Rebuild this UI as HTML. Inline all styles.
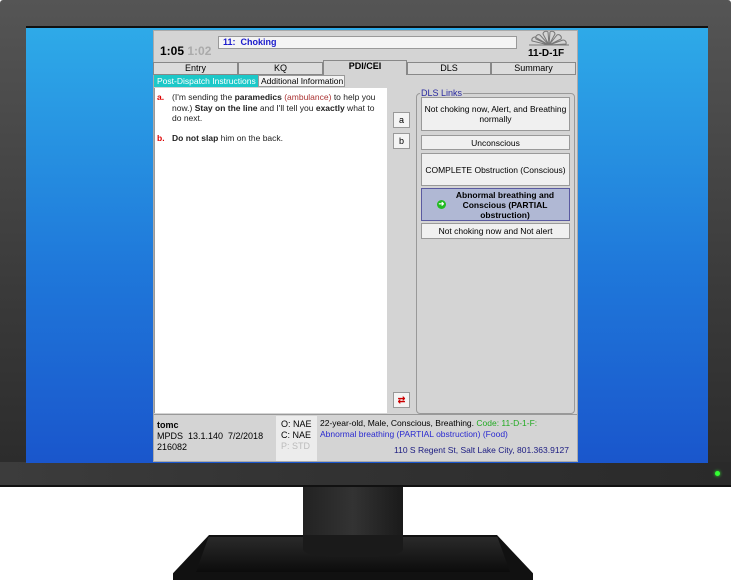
<!DOCTYPE html>
<html><head><style>
*{margin:0;padding:0;box-sizing:border-box}
body{width:732px;height:588px;background:#fff;position:relative;overflow:hidden;font-family:"Liberation Sans",Arial,sans-serif}
.a{position:absolute}
.bez{left:0;top:0;width:731px;height:487px;background:linear-gradient(#555,#3a3a3a 60%,#2a2a2a);border-radius:3px}
.bot{left:0;top:462px;width:731px;height:25px;background:linear-gradient(90deg,#3c3c3c,#333 40%,#2a2a2a);border-bottom:2px solid #111}
.scr{left:26px;top:26px;width:682px;height:437px;background:linear-gradient(#2eaae8,#1f78da 55%,#1a56cc);border-top:2px solid #111}
.win{left:153px;top:30px;width:425px;height:432px;background:#d4d4d4;border:1px solid #aaa;font-size:8.5px;color:#111}
.tab{top:62px;height:13px;border:1px solid #888;background:#dcdcdc;text-align:center;font-size:9px;line-height:11px}
.btn{left:421px;width:149px;background:#f0f0f0;border:1px solid #999;text-align:center;font-size:8.5px;display:flex;align-items:center;justify-content:center;line-height:10px}
.sb{left:393px;width:17px;height:16px;background:#f4f4f4;border:1px solid #999;text-align:center;font-size:9px;line-height:14px}
.mk{color:#d00;font-weight:bold;width:15px;flex:0 0 15px;display:inline-block}
b{font-weight:bold}
</style></head><body>
<div class="a bez"></div>
<div class="a bot"></div>
<div class="a" style="left:715px;top:471px;width:5px;height:5px;border-radius:50%;background:#3f3;box-shadow:0 0 3px #3f3"></div>
<div class="a scr"></div>
<!-- stand -->
<div class="a" style="left:303px;top:487px;width:100px;height:70px;background:linear-gradient(90deg,#222,#333 50%,#1a1a1a)"></div>
<div class="a" style="left:173px;top:535px;width:360px;height:45px;background:#111;clip-path:polygon(10% 0,90% 0,100% 85%,100% 100%,0 100%,0 85%)"></div>
<div class="a" style="left:196px;top:537px;width:314px;height:35px;background:linear-gradient(#2a2a2a,#0c0c0c);clip-path:polygon(4% 0,96% 0,100% 100%,0 100%)"></div>
<div class="a" style="left:303px;top:535px;width:100px;height:22px;background:#1a1a1a;border-radius:0 0 30px 30px/0 0 8px 8px"></div>

<div class="a win"></div>
<div class="a" style="left:160px;top:44px;font-size:12px;font-weight:bold">1:05 <span style="color:#aaa">1:02</span></div>
<div class="a" style="left:218px;top:36px;width:299px;height:13px;background:#f4f4f4;border:1px solid #999;font-size:9px;font-weight:bold;color:#1a1acc;padding-left:4px;line-height:11px">11:&nbsp; Choking</div>
<svg class="a" style="left:527px;top:30px" width="44" height="17" viewBox="0 0 44 17"><g fill="none" stroke="#777" stroke-width="1"><path d="M2 15h40M22 15L9 9a3 3 0 0 1 4-4zM22 15L16 4a3 3 0 0 1 5-2zM22 15L23 2a3 3 0 0 1 5 2zM22 15L30 5a3 3 0 0 1 4 4zM22 15L36 10a3 3 0 0 1 3 4zM22 15L5 11a3 3 0 0 1 3-4z"/></g></svg>
<div class="a" style="left:528px;top:48px;font-size:10px;font-weight:bold">11-D-1F</div>

<div class="a tab" style="left:153px;width:85px">Entry</div>
<div class="a tab" style="left:238px;width:85px">KQ</div>
<div class="a tab" style="left:323px;top:60px;height:15px;width:84px;font-weight:bold;border-bottom:none;background:#d4d4d4">PDI/CEI</div>
<div class="a tab" style="left:407px;width:84px">DLS</div>
<div class="a tab" style="left:491px;width:85px">Summary</div>
<div class="a" style="left:154px;top:75px;width:104px;height:12px;background:#1cc8c8;color:#fff;font-size:8.5px;line-height:12px;padding-left:3px">Post-Dispatch Instructions</div>
<div class="a" style="left:258px;top:75px;width:87px;height:12px;background:#f4f4f4;border:1px solid #999;font-size:8.5px;line-height:10px;padding-left:2px">Additional Information</div>

<div class="a" style="left:154px;top:88px;width:233px;height:325px;background:#fff;border-left:1px solid #999"></div>
<div class="a" style="left:157px;top:92px;width:225px;font-size:8.5px;line-height:10.5px;color:#222">
<div style="display:flex"><span class="mk">a.</span><span>(I'm sending the <b>paramedics</b> <span style="color:#a33">(ambulance)</span> to help you now.) <b>Stay on the line</b> and I'll tell you <b>exactly</b> what to do next.</span></div>
<div style="display:flex;margin-top:9px"><span class="mk">b.</span><span><b>Do not slap</b> him on the back.</span></div>
</div>
<div class="a sb" style="top:112px">a</div>
<div class="a sb" style="top:133px">b</div>
<div class="a sb" style="top:392px;color:#c00;font-weight:bold">⇄</div>

<div class="a" style="left:416px;top:93px;width:159px;height:321px;border:1px solid #999;border-radius:4px"></div>
<div class="a" style="left:420px;top:88px;background:#d4d4d4;color:#2a2aa0;font-size:9px;padding:0 1px">DLS Links</div>
<div class="a btn" style="top:97px;height:34px">Not choking now, Alert, and Breathing<br>normally</div>
<div class="a btn" style="top:135px;height:15px">Unconscious</div>
<div class="a btn" style="top:153px;height:33px">COMPLETE Obstruction (Conscious)</div>
<div class="a btn" style="top:188px;height:33px;background:#b0b8d4;border:1px solid #5a5aa0;font-weight:bold"><span style="display:inline-block;width:9px;height:9px;border-radius:50%;background:#2b2;margin-right:10px;color:#fff;font-size:7px;line-height:9px">➜</span><span>Abnormal breathing and<br>Conscious (PARTIAL<br>obstruction)</span></div>
<div class="a btn" style="top:223px;height:16px">Not choking now and Not alert</div>

<div class="a" style="left:154px;top:414px;width:423px;height:1px;background:#999"></div>
<div class="a" style="left:157px;top:420px;font-size:9px;line-height:11px"><b>tomc</b><br>MPDS&nbsp; 13.1.140&nbsp; 7/2/2018<br>216082</div>
<div class="a" style="left:276px;top:416px;width:41px;height:45px;background:#ececec;font-size:9px;line-height:11px;padding:3px 0 0 5px">O: NAE<br>C: NAE<br><span style="color:#bbb">P: STD</span></div>
<div class="a" style="left:320px;top:418px;font-size:8.5px;line-height:11px;width:255px">22-year-old, Male, Conscious, Breathing. <span style="color:#2a2">Code: 11-D-1-F:</span><br><span style="color:#2a2ad0">Abnormal breathing (PARTIAL obstruction) (Food)</span></div>
<div class="a" style="left:394px;top:445px;font-size:8.5px;color:#1a1a80">110 S Regent St, Salt Lake City, 801.363.9127</div>
</body></html>
